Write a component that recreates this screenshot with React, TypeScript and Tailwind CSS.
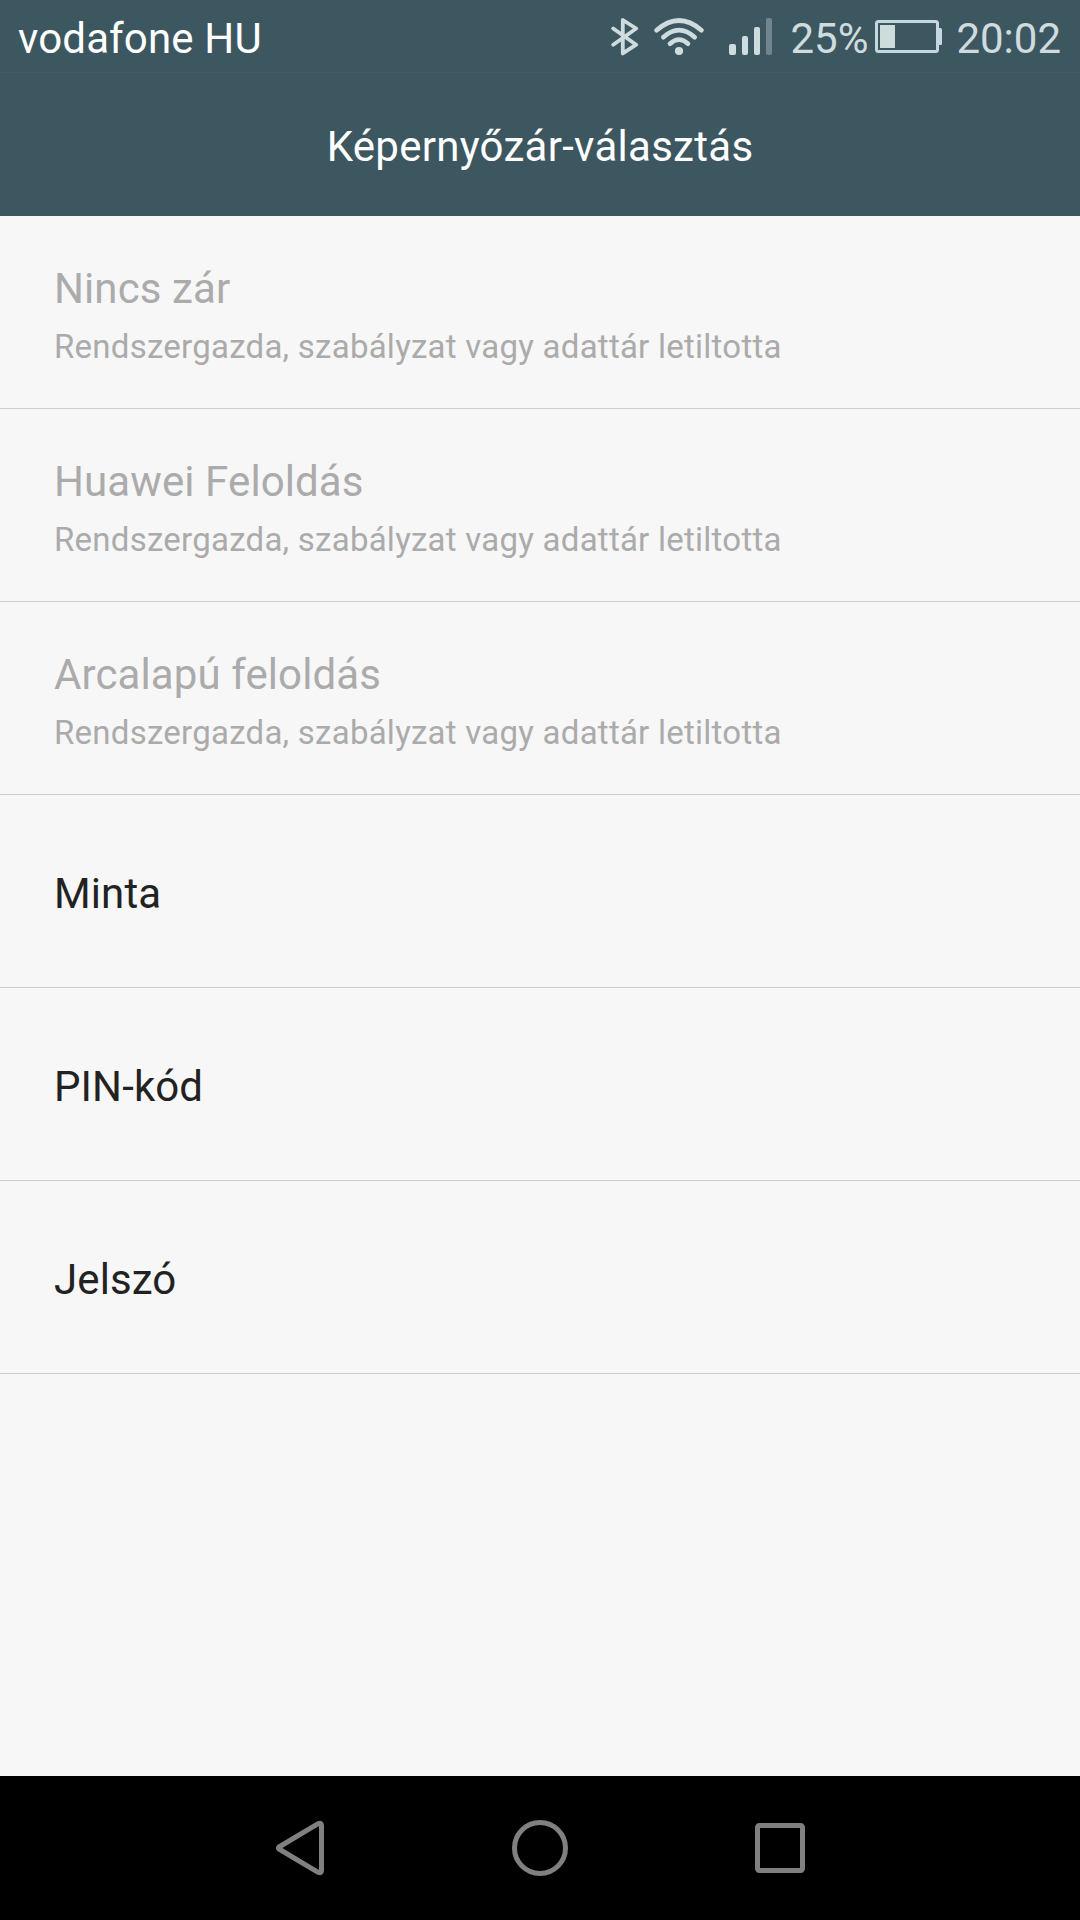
const lockedSummary = "Rendszergazda, szabályzat vagy adattár letiltotta";

const options = [
  { title: "Nincs zár", disabled: true },
  { title: "Huawei Feloldás", disabled: true },
  { title: "Arcalapú feloldás", disabled: true },
  { title: "Minta", disabled: false },
  { title: "PIN-kód", disabled: false },
  { title: "Jelszó", disabled: false },
];

function BluetoothIcon() {
  return (
    <svg width="28" height="40" viewBox="0 0 28 40" fill="none" className="shrink-0">
      <path
        d="M2.2 11.5 L25.2 27.7 L11.8 36.4 V3 L25.2 11.5 L2.2 27.7"
        stroke="#cfdcdf"
        strokeWidth="3.8"
        strokeLinecap="round"
        strokeLinejoin="round"
      />
    </svg>
  );
}

function WifiIcon() {
  return (
    <svg width="50" height="40" viewBox="0 0 50 40" fill="none" className="ml-[15px] shrink-0">
      <g stroke="#cfdcdf" strokeWidth="4.6" strokeLinecap="round">
        <path d="M2.6 13.2 Q25 -6.2 47.4 13.2" />
        <path d="M9.3 20.2 Q25 6 40.7 20.2" />
        <path d="M16 26.8 Q25 18.6 34 26.8" />
      </g>
      <circle cx="25" cy="34" r="4.1" fill="#cfdcdf" />
    </svg>
  );
}

function SignalIcon() {
  return (
    <svg width="44" height="40" viewBox="0 0 44 40" fill="#cfdcdf" className="ml-[25px] shrink-0">
      <rect x="0" y="27" width="7" height="11" rx="2" />
      <rect x="13" y="19" width="6" height="19" rx="2" />
      <rect x="25" y="10" width="6" height="28" rx="2" />
      <rect x="37" y="1" width="6" height="37" rx="2" fill="#71858f" />
    </svg>
  );
}

function BatteryIcon() {
  return (
    <svg width="68" height="34" viewBox="0 0 68 34" fill="none" className="ml-[7px] shrink-0">
      <rect x="1.5" y="1.5" width="61" height="30" rx="2" stroke="#c5d8e0" strokeWidth="3" />
      <rect x="5" y="5" width="15" height="23" fill="#cfdcdc" />
      <path d="M64 8h1.5q1.5 0 1.5 1.5v14q0 1.5-1.5 1.5H64z" fill="#c5d8e0" />
    </svg>
  );
}

function StatusBar() {
  return (
    <div className="flex h-[73px] items-center justify-between border-b border-[#435d67] pt-0.5 pr-[19px] pl-[18px] text-[42px] leading-[50px]">
      <span className="pt-1 tracking-[0.15px] text-white">vodafone HU</span>
      <div className="flex items-center text-[#cfdcdf]">
        <BluetoothIcon />
        <WifiIcon />
        <SignalIcon />
        <span className="ml-[17px] pt-1">25%</span>
        <BatteryIcon />
        <span className="ml-[13px] pt-1">20:02</span>
      </div>
    </div>
  );
}

function NavBar() {
  return (
    <nav className="flex h-36 items-center bg-black px-[270px]">
      <svg width="540" height="60" viewBox="0 0 540 60" fill="none" stroke="#808080" strokeWidth="5">
        <path d="M9 29 L48.2 5.7 Q51.5 4.2 51.5 7.5 V52.5 Q51.5 55.8 48.2 54.3 L9 31 Q8 30 9 29Z" strokeLinejoin="round" />
        <circle cx="270" cy="30" r="25.5" />
        <rect x="487.5" y="7.5" width="45" height="45" rx="2" />
      </svg>
    </nav>
  );
}

export default function App() {
  return (
    <div className="flex h-[1920px] w-[1080px] flex-col overflow-hidden bg-[#f7f7f7] font-['Roboto',sans-serif]">
      <header className="h-[216px] bg-[#3d5761]">
        <StatusBar />
        <h1 className="pt-[49px] text-center text-[42px] leading-[50px] tracking-[0.28px] text-white">
          Képernyőzár-választás
        </h1>
      </header>

      <ul className="flex-1">
        {options.map((option) => (
          <li
            key={option.title}
            className="flex h-[193px] flex-col justify-center border-b border-[#cccccc] px-[54px] pt-[5px]"
          >
            <span
              className={
                option.disabled
                  ? "text-[42px] leading-[56px] tracking-[0.1px] text-[#ababab]"
                  : "text-[42px] leading-[56px] tracking-[0.1px] text-[#222222]"
              }
            >
              {option.title}
            </span>
            {option.disabled && (
              <span className="pt-2 text-[33px] leading-[44px] tracking-[0.25px] text-[#ababab]">
                {lockedSummary}
              </span>
            )}
          </li>
        ))}
      </ul>

      <NavBar />
    </div>
  );
}
